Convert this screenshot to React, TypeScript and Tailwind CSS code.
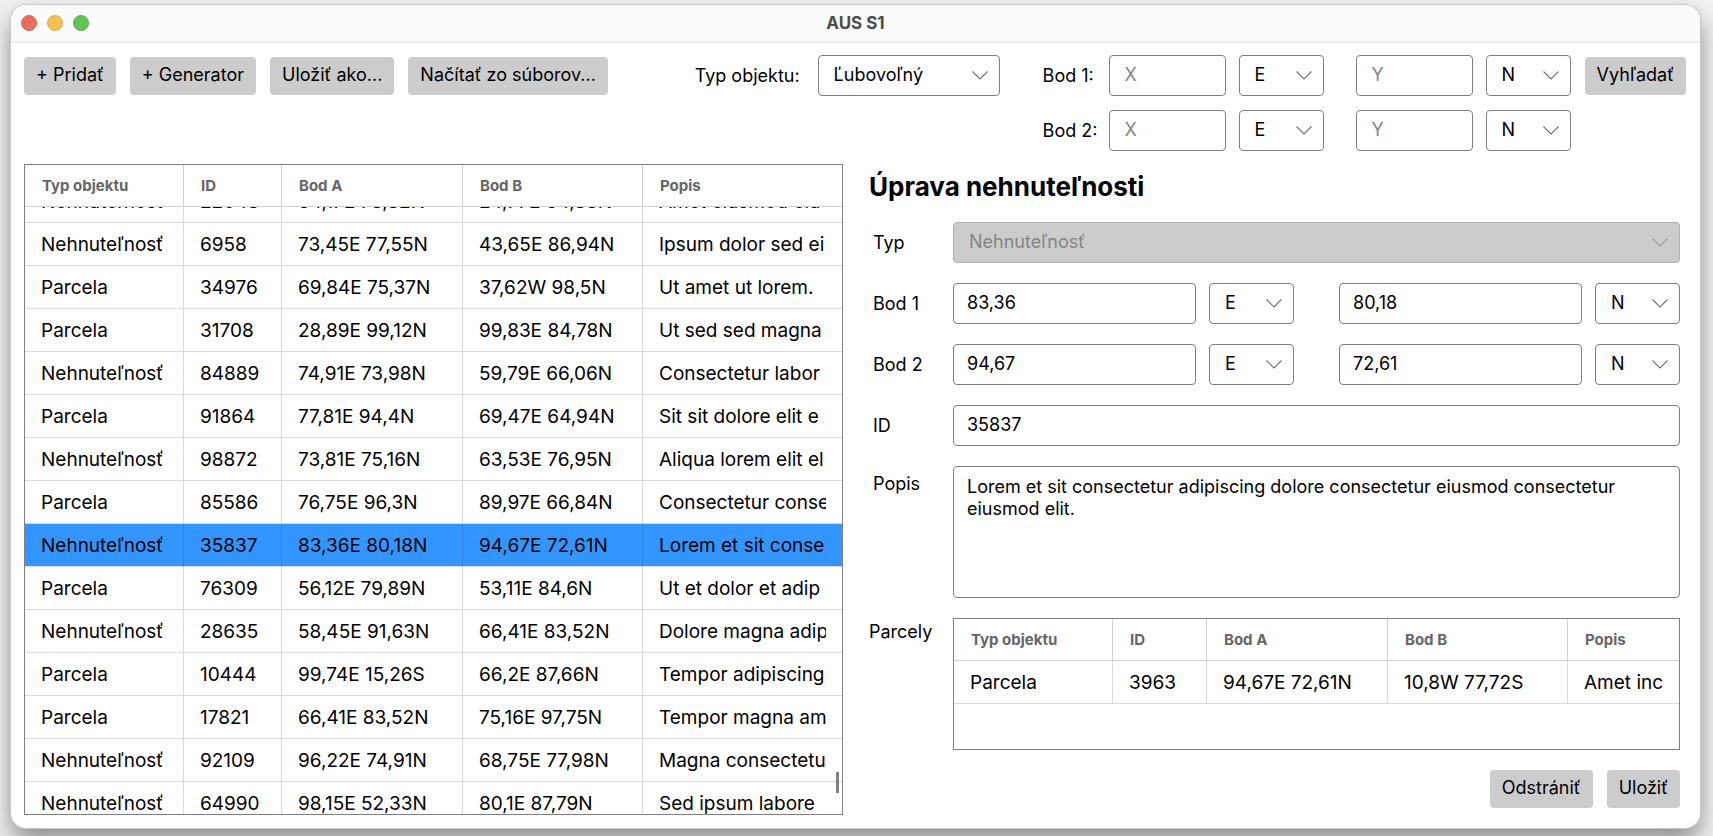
import { useLayoutEffect, useRef } from "react";
import type { InputHTMLAttributes, ReactNode } from "react";

type Row = [string, string, string, string, string];

const objects: Row[] = [
  ["Nehnuteľnosť", "22048", "64,17E 78,82N", "24,77E 64,88N", "Amet eiusmod eiu"],
  ["Nehnuteľnosť", "6958", "73,45E 77,55N", "43,65E 86,94N", "Ipsum dolor sed ei"],
  ["Parcela", "34976", "69,84E 75,37N", "37,62W 98,5N", "Ut amet ut lorem."],
  ["Parcela", "31708", "28,89E 99,12N", "99,83E 84,78N", "Ut sed sed magna"],
  ["Nehnuteľnosť", "84889", "74,91E 73,98N", "59,79E 66,06N", "Consectetur labor"],
  ["Parcela", "91864", "77,81E 94,4N", "69,47E 64,94N", "Sit sit dolore elit e"],
  ["Nehnuteľnosť", "98872", "73,81E 75,16N", "63,53E 76,95N", "Aliqua lorem elit el"],
  ["Parcela", "85586", "76,75E 96,3N", "89,97E 66,84N", "Consectetur consectetur"],
  ["Nehnuteľnosť", "35837", "83,36E 80,18N", "94,67E 72,61N", "Lorem et sit conse"],
  ["Parcela", "76309", "56,12E 79,89N", "53,11E 84,6N", "Ut et dolor et adip"],
  ["Nehnuteľnosť", "28635", "58,45E 91,63N", "66,41E 83,52N", "Dolore magna adipiscing"],
  ["Parcela", "10444", "99,74E 15,26S", "66,2E 87,66N", "Tempor adipiscing"],
  ["Parcela", "17821", "66,41E 83,52N", "75,16E 97,75N", "Tempor magna amet"],
  ["Nehnuteľnosť", "92109", "96,22E 74,91N", "68,75E 77,98N", "Magna consectetur"],
  ["Nehnuteľnosť", "64990", "98,15E 52,33N", "80,1E 87,79N", "Sed ipsum labore"],
];

const parcels: Row[] = [["Parcela", "3963", "94,67E 72,61N", "10,8W 77,72S", "Amet inc"]];

const headers = ["Typ objektu", "ID", "Bod A", "Bod B", "Popis"];

function Button({ children }: { children: ReactNode }) {
  return (
    <button type="button" className="h-[38px] shrink-0 whitespace-nowrap rounded bg-[#cccccc] px-3 pb-0.5 text-lg leading-6 text-black">
      {children}
    </button>
  );
}

function Select({ id, label, options, className, disabled }: {
  id: string; label?: string; options: string[]; className: string; disabled?: boolean;
}) {
  return (
    <div className={`relative h-[41px] ${className}`}>
      <select
        id={id}
        aria-label={label}
        disabled={disabled}
        className="h-full w-full appearance-none rounded border border-[#7f7f7f] bg-white pb-0.5 pl-[15px] pr-9 text-lg leading-6 text-black disabled:border-[#b0b0b0] disabled:bg-[#cccccc] disabled:text-[#858585] disabled:opacity-100"
      >
        {options.map((o) => <option key={o}>{o}</option>)}
      </select>
      <svg viewBox="0 0 16 9" className={`pointer-events-none absolute right-3 top-4 h-[9px] w-4 ${disabled ? "text-[#9a9a9a]" : "text-[#707070]"}`} fill="none" stroke="currentColor" strokeWidth="1.1" aria-hidden="true">
        <path d="M0.5 0.5 8 8 15.5 0.5" />
      </svg>
    </div>
  );
}

function Field({ className, ...rest }: InputHTMLAttributes<HTMLInputElement>) {
  return (
    <input
      type="text"
      {...rest}
      className={`h-[41px] min-w-0 rounded border border-[#7f7f7f] bg-white pb-0.5 text-lg leading-6 text-black placeholder:text-[#858585] placeholder:opacity-100 ${className ?? ""}`}
    />
  );
}

function Grid({ rows, selected, idCol, label }: { rows: Row[]; selected?: string; idCol: string; label: string }) {
  return (
    <table aria-label={label} className="w-full table-fixed border-separate border-spacing-0 text-left">
      <colgroup>
        <col className="w-[159px]" />
        <col className={idCol} />
        <col className="w-[181px]" />
        <col className="w-[180px]" />
        <col />
      </colgroup>
      <thead className="sticky top-0 z-10 bg-white">
        <tr className="h-[42px]">
          {headers.map((h) => (
            <th key={h} scope="col" className="border-b border-r border-[#d0d0d0] py-0 pl-[17px] text-[15px] font-bold leading-5 text-[#666666] last:border-r-0">
              {h}
            </th>
          ))}
        </tr>
      </thead>
      <tbody>
        {rows.map((r) => (
          <tr key={r[1]} aria-selected={r[1] === selected} className="group h-[43px] aria-selected:bg-[#3395ff]">
            {r.map((c, i) => (
              <td key={i} className="border-b border-r border-[#dadada] px-4 pb-0 pt-0.5 text-[19px] leading-6 text-black last:border-r-0 group-aria-selected:border-r-[#2a84e4]">
                <div className="overflow-hidden whitespace-nowrap">{c}</div>
              </td>
            ))}
          </tr>
        ))}
      </tbody>
    </table>
  );
}

function SearchPoint({ n }: { n: number }) {
  return (
    <div className="flex items-center">
      <label htmlFor={`search-x${n}`} className="w-[66px] whitespace-nowrap text-lg leading-6">Bod {n}:</label>
      <Field id={`search-x${n}`} placeholder="X" className="w-[117px] px-[15px]" />
      <Select id={`search-ew${n}`} label={`Bod ${n} E/W`} options={["E", "W"]} className="ml-[13px] w-[85px]" />
      <Field aria-label={`Bod ${n} Y`} placeholder="Y" className="ml-8 w-[117px] px-[15px]" />
      <Select id={`search-ns${n}`} label={`Bod ${n} N/S`} options={["N", "S"]} className="ml-[13px] w-[85px]" />
    </div>
  );
}

function EditPoint({ n, x, y }: { n: number; x: string; y: string }) {
  return (
    <>
      <label htmlFor={`edit-x${n}`} className="self-center pl-1">Bod {n}</label>
      <div className="flex">
        <Field id={`edit-x${n}`} defaultValue={x} className="flex-1 px-[13px]" />
        <Select id={`edit-ew${n}`} label={`Bod ${n} E/W`} options={["E", "W"]} className="ml-[13px] w-[85px]" />
        <Field aria-label={`Bod ${n} Y`} defaultValue={y} className="ml-[45px] flex-1 px-[13px]" />
        <Select id={`edit-ns${n}`} label={`Bod ${n} N/S`} options={["N", "S"]} className="ml-[13px] w-[85px]" />
      </div>
    </>
  );
}

export default function App() {
  const list = useRef<HTMLDivElement>(null);
  useLayoutEffect(() => {
    if (list.current) list.current.scrollTop = 27;
  }, []);

  return (
    <div className="flex h-screen overflow-hidden bg-[#f2f2f2] pb-2 pl-[11px] pr-[13px] pt-[5px] font-['Inter','Liberation_Sans',sans-serif] text-black">
      <div className="flex min-w-0 flex-1 flex-col overflow-hidden rounded-[15px] bg-white shadow-[0_0_0_1px_#c8c8c8,0_12px_24px_#00000070]">
        <header className="relative flex h-[38px] shrink-0 items-center justify-center border-b-2 border-[#eeeeee] bg-[#fbfbfb]">
          <div className="absolute left-[10px] flex gap-[10px]">
            <button type="button" aria-label="Zavrieť" className="size-4 rounded-full border border-[#dd6156] bg-[#ed6a5e]" />
            <button type="button" aria-label="Minimalizovať" className="size-4 rounded-full border border-[#e0ac48] bg-[#f5bf4f]" />
            <button type="button" aria-label="Maximalizovať" className="size-4 rounded-full border border-[#58b34b] bg-[#61c554]" />
          </div>
          <h1 className="text-[17px] font-bold leading-5 text-[#4d4d4d]">AUS S1</h1>
        </header>

        <div className="flex shrink-0 items-start justify-between pl-[13px] pr-[14px] pt-3">
          <div className="flex gap-[14px] pt-0.5">
            <Button>+ Pridať</Button>
            <Button>+ Generator</Button>
            <Button>Uložiť ako...</Button>
            <Button>Načítať zo súborov...</Button>
          </div>
          <div className="flex">
            <div className="mr-[43px] flex h-[41px] items-center gap-[18px]">
              <label htmlFor="search-type" className="whitespace-nowrap text-lg leading-6">Typ objektu:</label>
              <Select id="search-type" options={["Ľubovoľný", "Nehnuteľnosť", "Parcela"]} className="w-[182px]" />
            </div>
            <div className="flex flex-col gap-[14px]">
              <SearchPoint n={1} />
              <SearchPoint n={2} />
            </div>
            <div className="ml-[14px] pt-0.5">
              <Button>Vyhľadať</Button>
            </div>
          </div>
        </div>

        <main className="flex min-h-0 flex-1 gap-[26px] pb-[13px] pl-[13px] pr-5 pt-[13px]">
          <section className="relative min-w-0 flex-[818] border border-[#7f7f7f]">
            <div ref={list} className="h-full overflow-y-auto [scrollbar-width:none]">
              <Grid rows={objects} selected="35837" idCol="w-[98px]" label="Objekty" />
            </div>
            <div className="absolute bottom-[21px] right-[3px] h-[21px] w-[3px] bg-[#808080]" />
          </section>

          <section className="flex min-w-0 flex-[812] flex-col">
            <h2 className="mb-[19px] pt-[7px] text-[26px] font-bold leading-8">Úprava nehnuteľnosti</h2>
            <div className="grid grid-cols-[84px_minmax(0,1fr)] gap-y-5 text-lg leading-[22px]">
              <label htmlFor="edit-type" className="self-center pl-1">Typ</label>
              <Select id="edit-type" options={["Nehnuteľnosť"]} className="w-full" disabled />
              <EditPoint n={1} x="83,36" y="80,18" />
              <EditPoint n={2} x="94,67" y="72,61" />
              <label htmlFor="edit-id" className="self-center pl-1">ID</label>
              <Field id="edit-id" defaultValue="35837" className="w-full px-[13px]" />
              <label htmlFor="edit-desc" className="pl-1 pt-[7px]">Popis</label>
              <textarea
                id="edit-desc"
                defaultValue="Lorem et sit consectetur adipiscing dolore consectetur eiusmod consectetur eiusmod elit."
                className="block h-[132px] w-full resize-none rounded border border-[#7f7f7f] px-[13px] py-[9px]"
              />
              <span className="pt-[3px]">Parcely</span>
              <div className="h-[132px] overflow-hidden border border-[#7f7f7f]">
                <Grid rows={parcels} idCol="w-[94px]" label="Parcely" />
              </div>
            </div>
            <div className="mt-5 flex justify-end gap-[14px]">
              <Button>Odstrániť</Button>
              <Button>Uložiť</Button>
            </div>
          </section>
        </main>
      </div>
    </div>
  );
}
